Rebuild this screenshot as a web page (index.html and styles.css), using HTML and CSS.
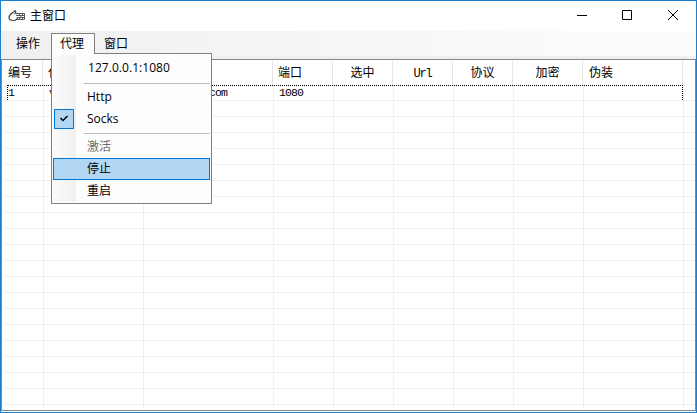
FILE: index.html
```html
<!DOCTYPE html>
<html lang="zh-CN">
<head>
<meta charset="utf-8">
<title>主窗口</title>
<link rel="stylesheet" href="styles.css">
</head>
<body>
<div class="window">
  <header class="titlebar">
    <svg class="app-icon" width="18" height="14" viewBox="0 0 18 14" fill="none" stroke="#444">
      <path stroke-width="1.200" d="M7 1.500 C6 3.500 1 4.500 1 8.500 C1 10.500 3 11.500 5.500 11.500 C8 11.500 9.500 10.500 9.500 8 M7 1.500 C8.500 2.500 7.500 4 6.500 5"/>
      <path stroke="#555" d="M8 4.500 H16.500 V10.500 H9 M8 6.500 H16 M9 8.500 H16 M11.500 4.500 V6.500 M14.500 4.500 V6.500 M13 6.500 V8.500 M11.500 8.500 V10.500 M14.500 8.500 V10.500"/>
    </svg>
    <h1 class="title">主窗口</h1>
    <svg class="controls" width="104" height="12" viewBox="0 0 104 12" fill="none" stroke="#000">
      <path d="M1 6.500 H11 M46.500 1.500 H55.500 V10.500 H46.500 Z M92 1 L102 11 M102 1 L92 11"/>
    </svg>
  </header>
  <nav class="menubar">
    <div class="menu">操作</div>
    <div class="menu open">代理
      <div class="dropdown">
        <div class="item address">127.0.0.1:1080</div>
        <div class="separator"></div>
        <div class="item">Http</div>
        <div class="item checked"><span class="check"><svg width="10" height="8" viewBox="0 0 10 8" fill="none" stroke="#000" stroke-width="1.500"><path d="M1.500 3 L4 5.500 L8.500 1"/></svg></span>Socks</div>
        <div class="separator lower"></div>
        <div class="item disabled">激活</div>
        <div class="item selected">停止</div>
        <div class="item">重启</div>
      </div>
    </div>
    <div class="menu">窗口</div>
  </nav>
  <main class="list">
    <div class="columns">
      <div>编号</div><div>代</div><div></div><div>端口</div><div class="center">选中</div><div class="center latin">Url</div><div class="center">协议</div><div class="center">加密</div><div class="last">伪装</div>
    </div>
    <div class="rows">
      <div class="row focused"><div>1</div><div>v</div><div class="host">.com</div><div>1080</div><div></div><div></div><div></div><div></div><div></div></div>
      <div class="row"><div></div><div></div><div></div><div></div><div></div><div></div><div></div><div></div><div></div></div>
      <div class="row"><div></div><div></div><div></div><div></div><div></div><div></div><div></div><div></div><div></div></div>
      <div class="row"><div></div><div></div><div></div><div></div><div></div><div></div><div></div><div></div><div></div></div>
      <div class="row"><div></div><div></div><div></div><div></div><div></div><div></div><div></div><div></div><div></div></div>
      <div class="row"><div></div><div></div><div></div><div></div><div></div><div></div><div></div><div></div><div></div></div>
      <div class="row"><div></div><div></div><div></div><div></div><div></div><div></div><div></div><div></div><div></div></div>
      <div class="row"><div></div><div></div><div></div><div></div><div></div><div></div><div></div><div></div><div></div></div>
      <div class="row"><div></div><div></div><div></div><div></div><div></div><div></div><div></div><div></div><div></div></div>
      <div class="row"><div></div><div></div><div></div><div></div><div></div><div></div><div></div><div></div><div></div></div>
      <div class="row"><div></div><div></div><div></div><div></div><div></div><div></div><div></div><div></div><div></div></div>
      <div class="row"><div></div><div></div><div></div><div></div><div></div><div></div><div></div><div></div><div></div></div>
      <div class="row"><div></div><div></div><div></div><div></div><div></div><div></div><div></div><div></div><div></div></div>
      <div class="row"><div></div><div></div><div></div><div></div><div></div><div></div><div></div><div></div><div></div></div>
      <div class="row"><div></div><div></div><div></div><div></div><div></div><div></div><div></div><div></div><div></div></div>
      <div class="row"><div></div><div></div><div></div><div></div><div></div><div></div><div></div><div></div><div></div></div>
      <div class="row"><div></div><div></div><div></div><div></div><div></div><div></div><div></div><div></div><div></div></div>
      <div class="row"><div></div><div></div><div></div><div></div><div></div><div></div><div></div><div></div><div></div></div>
      <div class="row"><div></div><div></div><div></div><div></div><div></div><div></div><div></div><div></div><div></div></div>
      <div class="row"><div></div><div></div><div></div><div></div><div></div><div></div><div></div><div></div><div></div></div>
      <div class="row"><div></div><div></div><div></div><div></div><div></div><div></div><div></div><div></div><div></div></div>
    </div>
  </main>
</div>
</body>
</html>
```

FILE: styles.css
```css
* { box-sizing: border-box; }
body { margin: 0; }
.window {
  width: 697px;
  height: 413px;
  border: 1px solid #1a80d2;
  background: #fff;
  display: flex;
  flex-direction: column;
  overflow: hidden;
  font: 12px/16px "Open Sans", "Noto Sans CJK SC", sans-serif;
  color: #000;
}
.titlebar {
  height: 30px;
  flex: none;
  display: flex;
  align-items: center;
  padding: 0 16px 0 7px;
}
.app-icon { margin-right: 4px; }
.title { margin: 0; font-size: 12px; font-weight: 400; }
.controls { margin: -2px 0 0 auto; }
.menubar {
  height: 28px;
  flex: none;
  display: flex;
  align-items: flex-start;
  padding: 2px 0 0 6px;
  background: linear-gradient(to right, #f0f0f0, #fbfbfb 85%);
  border-bottom: 3px solid #f0f0f0;
}
.menu {
  width: 44px;
  height: 21px;
  line-height: 21px;
  text-align: center;
  position: relative;
  padding-right: 2px;
}
.menu.open {
  background: #fdfdfd;
  border: 1px solid #808080;
  border-bottom: 0;
  line-height: 19px;
  z-index: 2;
}
.dropdown {
  position: absolute;
  top: 19px;
  left: -1px;
  width: 161px;
  height: 151px;
  padding: 2px 1px 1px;
  border: 1px solid #808080;
  background: linear-gradient(to right, #fcfcfc, #f0f0f0) 0 1px / 24px 147px no-repeat, #fdfdfd;
  text-align: left;
}
.dropdown::before {
  content: "";
  position: absolute;
  top: -1px;
  left: 0;
  width: 42px;
  height: 1px;
  background: #fdfdfd;
}
.item {
  height: 22px;
  padding-left: 34px;
  line-height: 22px;
  display: flex;
  align-items: center;
}
.item.address { height: 25px; padding: 0 0 1px 35px; letter-spacing: 0.05px; }
.separator { height: 1px; margin: 2px 0 2px 31px; background: #bdbdbd; }
.separator.lower { margin-top: 3px; }
.item.checked { padding-left: 1px; }
.check {
  width: 20px;
  height: 20px;
  margin-right: 13px;
  border: 1px solid #0078d7;
  background: #b3d7f3;
  display: flex;
  align-items: center;
  justify-content: center;
}
.item.disabled { color: #6d6d6d; }
.item.selected { padding-left: 33px; background: #b3d7f3; border: 1px solid #0078d7; }
.list {
  height: 352px;
  flex: none;
  border: 1px solid #828790;
  padding: 1px;
  overflow: hidden;
  font-family: "Liberation Mono", "Noto Sans CJK SC", monospace;
}
.columns, .row {
  display: grid;
  grid-template-columns: 41px 100px 130px 60px 60px 60px 60px 70px 100px;
}
.columns { height: 24px; width: 682px; grid-template-columns: 40px 100px 130px 60px 60px 60px 60px 70px 100px; }
.columns div { padding: 0 5px; border-right: 1px solid #e5e5e5; line-height: 27px; font-size: 12px; white-space: nowrap; overflow: hidden; }
.columns .center { text-align: center; padding: 0; }
.columns .latin { letter-spacing: -1.2px; }
.columns .last { padding-left: 6px; }
.rows { height: 324px; overflow: hidden; }
.row { width: 691px; height: 16px; border-bottom: 1px solid #f0f0f0; position: relative; }
.row div { padding-left: 5px; border-right: 1px solid #f0f0f0; font-size: 11.5px; letter-spacing: -0.9px; line-height: 16px; height: 15px; }
.row .host { padding-left: 59px; }
.focused::after {
  content: "";
  position: absolute;
  inset: 0 11px 0 4px;
  border: 1px dotted #000;
  border-bottom: 0;
}
```
